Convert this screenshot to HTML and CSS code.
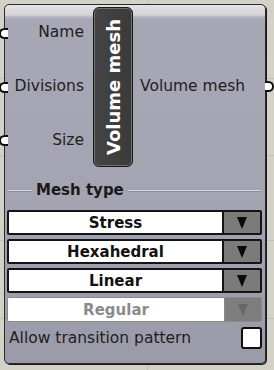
FILE: index.html
```html
<!DOCTYPE html>
<html>
<head>
<meta charset="utf-8">
<link rel="stylesheet" href="styles.css">
</head>
<body>
<div class="node">
  <span class="pin pin-in pin-1"></span>
  <span class="pin pin-in pin-2"></span>
  <span class="pin pin-in pin-3"></span>
  <span class="pin pin-out"></span>
  <div class="top">
    <div class="inputs">
      <div class="in-label">Name</div>
      <div class="in-label">Divisions</div>
      <div class="in-label">Size</div>
    </div>
    <div class="pill"><span class="pill-text">Volume mesh</span></div>
    <div class="output">Volume mesh</div>
  </div>
  <div class="sep"><span class="sep-line short"></span><span class="sep-text">Mesh type</span><span class="sep-line"></span></div>
  <div class="drops">
    <div class="drop"><div class="drop-value">Stress</div><div class="drop-btn"><span class="tri"></span></div></div>
    <div class="drop"><div class="drop-value">Hexahedral</div><div class="drop-btn"><span class="tri"></span></div></div>
    <div class="drop"><div class="drop-value">Linear</div><div class="drop-btn"><span class="tri"></span></div></div>
    <div class="drop disabled"><div class="drop-value">Regular</div><div class="drop-btn"><span class="tri"></span></div></div>
  </div>
  <div class="check-row">
    <span class="check-label">Allow transition pattern</span>
    <span class="checkbox"></span>
  </div>
</div>
</body>
</html>
```

FILE: styles.css
```css
html, body {
  margin: 0;
  padding: 0;
}
body {
  width: 274px;
  height: 370px;
  overflow: hidden;
  background-color: #d4d1c9;
  background-image:
    linear-gradient(#c3bfb7, #c3bfb7),
    linear-gradient(#c3bfb7, #c3bfb7),
    linear-gradient(#c3bfb7, #c3bfb7),
    linear-gradient(#c3bfb7, #c3bfb7),
    linear-gradient(#c3bfb7, #c3bfb7);
  background-repeat: no-repeat;
  background-size: 100% 1px, 100% 1px, 100% 1px, 100% 1px, 1px 100%;
  background-position: 0 78px, 0 155px, 0 240px, 0 318px, 147px 0;
  font-family: "DejaVu Sans", Verdana, sans-serif;
}
.node {
  position: relative;
  box-sizing: border-box;
  margin: 4px 0 0 4px;
  width: 262px;
  height: 360px;
  border: 1px solid #2a2a2a;
  border-radius: 5px;
  box-shadow: 1px 1px 0 #1c1c1c;
  background: linear-gradient(#e4e4e6 0, #d3d3d8 10px, #b6b5c1 12px, #a8a7b5 14px, #a5a4b2 50%, #9b9aa8 100%);
}
.pin {
  position: absolute;
  width: 9px;
  height: 11px;
  box-sizing: border-box;
  background: #fff;
  border: 2.5px solid #0d0d0d;
}
.pin-in {
  left: -6px;
  border-radius: 6px 0 0 6px;
  border-right: none;
}
.pin-1 { top: 23px; }
.pin-2 { top: 77px; }
.pin-3 { top: 130px; }
.pin-out {
  right: -9px;
  top: 76px;
  border-radius: 0 6px 6px 0;
  border-left: none;
}
.top {
  display: grid;
  grid-template-columns: 80px 40px 1fr;
  column-gap: 8px;
  padding-top: 2px;
  height: 162px;
  box-sizing: border-box;
}
.inputs {
  display: flex;
  flex-direction: column;
  margin-top: -2px;
}
.in-label {
  height: 54px;
  display: flex;
  align-items: center;
  justify-content: flex-end;
  padding-right: 1px;
  font-size: 15.5px;
  color: #1e1e1e;
}
.pill {
  height: 160px;
  box-sizing: border-box;
  border: 1px solid #1a1a1a;
  border-radius: 6px;
  box-shadow: inset 0 0 0 1px #6e6e6e;
  background: linear-gradient(90deg, #454545, #3a3a3a);
  display: flex;
  align-items: center;
  justify-content: center;
}
.pill-text {
  writing-mode: vertical-rl;
  transform: rotate(180deg);
  color: #fff;
  font-weight: bold;
  font-size: 18px;
  white-space: nowrap;
}
.output {
  align-self: center;
  margin-left: -1px;
  margin-top: -2px;
  font-size: 15.5px;
  color: #1e1e1e;
  white-space: nowrap;
}
.sep {
  display: flex;
  align-items: center;
  margin: 14px 4px 0 3px;
  height: 18px;
}
.sep-line {
  flex: 1;
  height: 1px;
  background: #d6d6dc;
  box-shadow: 0 1px 0 #8e8d9a;
}
.sep-line.short {
  flex: 0 0 24px;
}
.sep-text {
  font-weight: bold;
  font-size: 15px;
  color: #1a1a1a;
  padding: 0 4px;
}
.drops {
  display: flex;
  flex-direction: column;
  gap: 4px;
  margin: 11px 3px 0 2px;
}
.drop {
  display: flex;
  height: 25px;
  box-sizing: border-box;
  border: 2px solid #141414;
  border-radius: 2px;
  background: #fff;
}
.drop-value {
  flex: 1;
  display: flex;
  align-items: center;
  justify-content: center;
  font-weight: bold;
  font-size: 15px;
  color: #111;
}
.drop-btn {
  width: 36px;
  border-left: 2px solid #141414;
  background: #7b7b7b;
  display: flex;
  align-items: center;
  justify-content: center;
}
.tri {
  width: 0;
  height: 0;
  border-left: 5px solid transparent;
  border-right: 5px solid transparent;
  border-top: 12px solid #0a0a0a;
}
.drop.disabled {
  border-color: #8a8a8a;
  border-width: 1px;
  padding: 1px;
  background: #fff;
}
.drop.disabled .drop-value {
  color: #8b8b8b;
}
.drop.disabled .drop-btn {
  border-left: 1px solid #8a8a8a;
  background: #7e7e7e;
  margin: -1px -1px -1px 1px;
}
.drop.disabled .tri {
  border-top-color: #676767;
}
.check-row {
  display: flex;
  align-items: center;
  justify-content: space-between;
  margin: 5px 3px 0 4px;
  height: 22px;
}
.check-label {
  font-size: 15.5px;
  color: #1e1e1e;
  white-space: nowrap;
}
.checkbox {
  width: 21px;
  height: 22px;
  box-sizing: border-box;
  border: 2px solid #111;
  border-radius: 3px;
  background: #fff;
}
```
